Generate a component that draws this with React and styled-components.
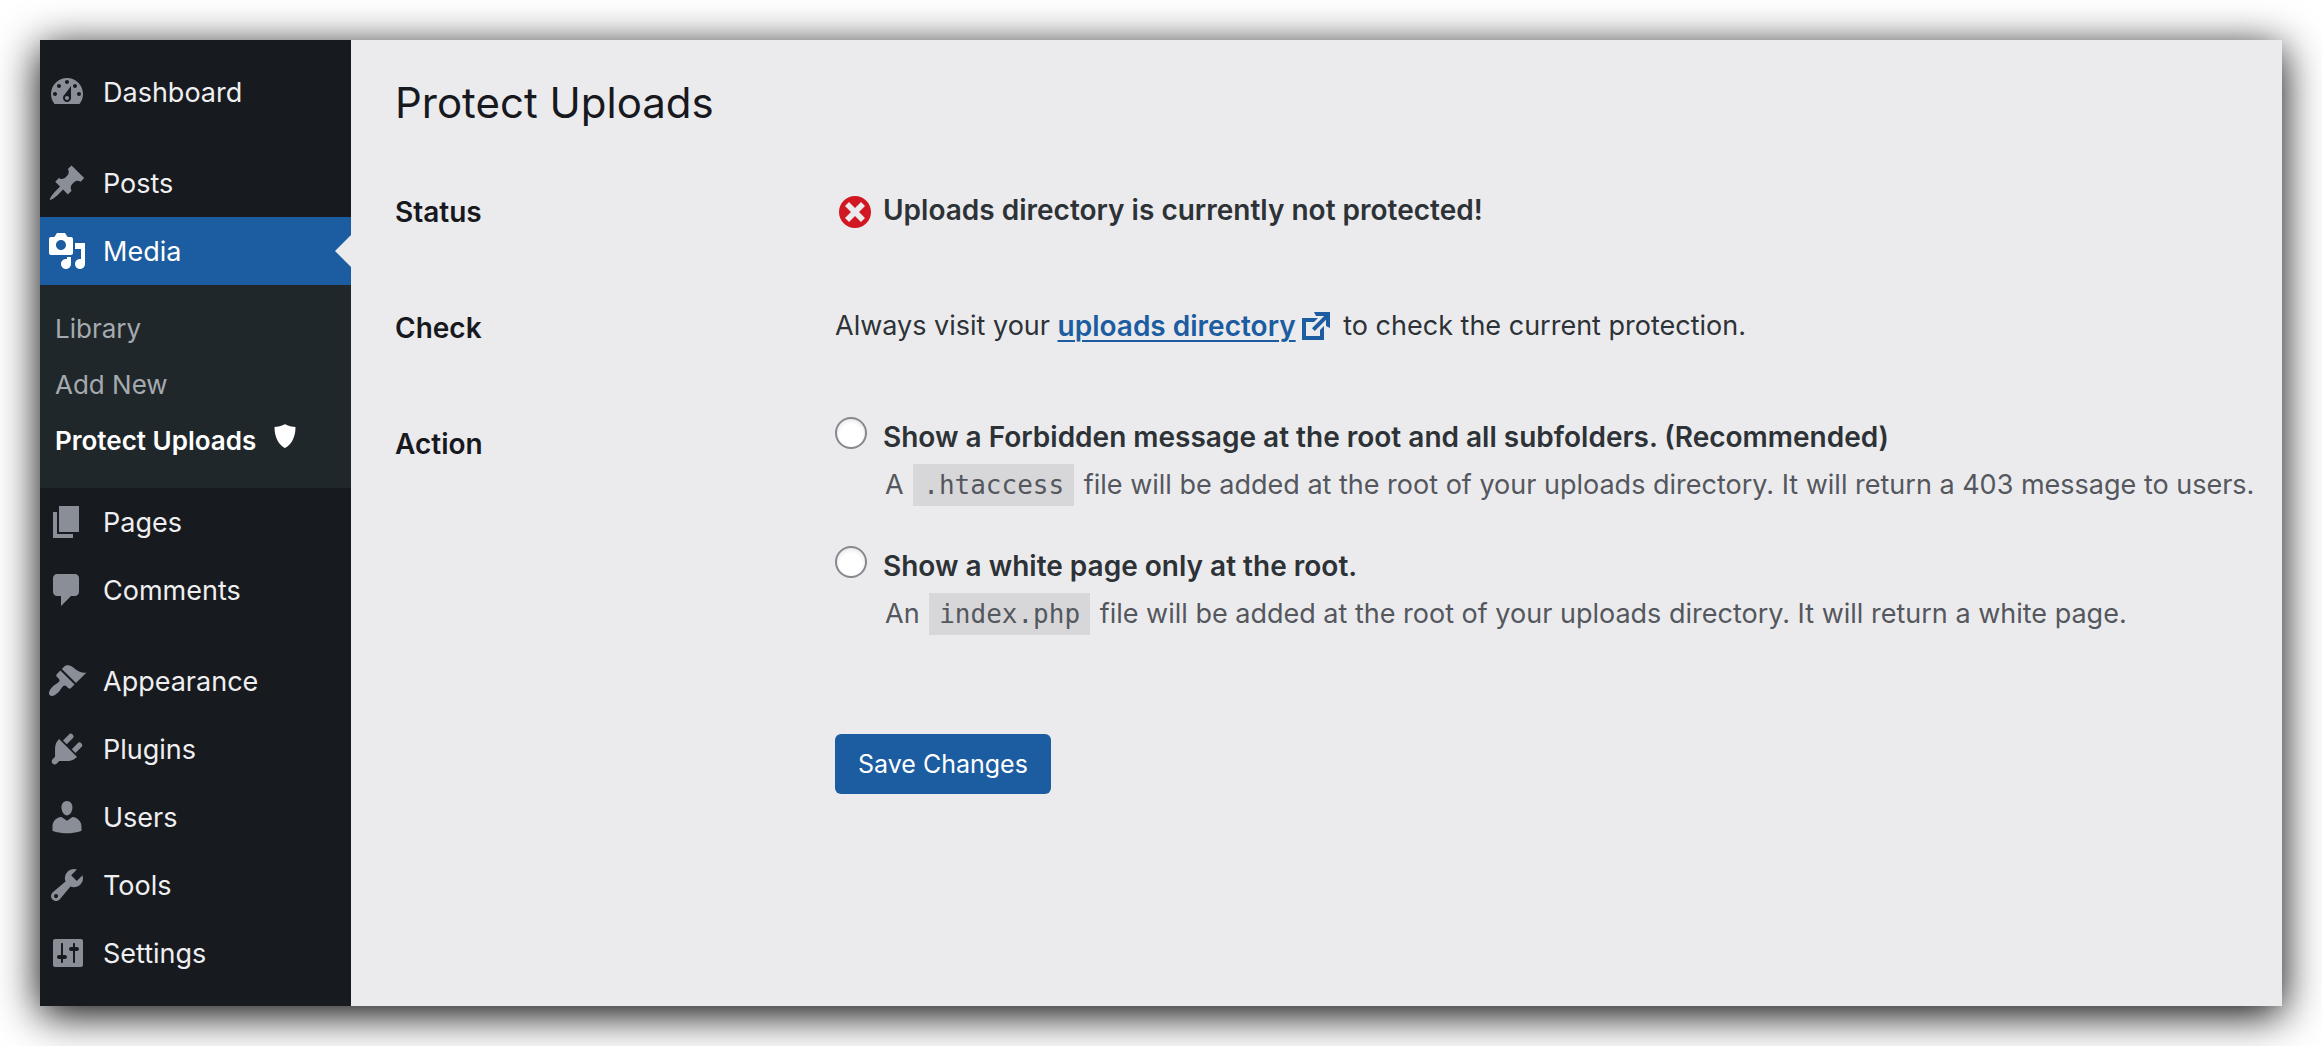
import React from "react";
import styled, { createGlobalStyle, css } from "styled-components";

const color = {
  sidebar: "#171a1f",
  submenu: "#20272a",
  accent: "#1c5ca0",
  surface: "#ebebed",
  heading: "#17191e",
  text: "#2d3237",
  muted: "#54575d",
  icon: "#8a8f97",
  error: "#d01722",
};

const GlobalStyle = createGlobalStyle`
  *, *::before, *::after { box-sizing: border-box; }
  body {
    margin: 0;
    background: #fff;
    font-family: Inter, "Liberation Sans", sans-serif;
    font-size: 27px;
    color: ${color.text};
  }
`;

const strongText = css`
  font-size: 28px;
  font-weight: 600;
`;

const Page = styled.div`
  padding: 40px;
`;

const Window = styled.div`
  display: flex;
  background: ${color.surface};
  box-shadow: 0 8px 40px #000;
`;

const Sidebar = styled.nav`
  flex: 0 0 311px;
  padding: 18px 0 19px;
  background: ${color.sidebar};
`;

const MenuGroup = styled.ul`
  margin: 0;
  padding: 0;
  list-style: none;

  & + & {
    margin-top: 23px;
  }
`;

const MenuLink = styled.a`
  position: relative;
  display: flex;
  align-items: center;
  gap: 16px;
  height: 68px;
  padding-left: 7px;
  color: #efeff1;
  text-decoration: none;

  svg {
    color: ${color.icon};
  }

  ${({ $current }) =>
    $current &&
    css`
      background: ${color.accent};
      color: #fff;

      svg {
        color: #fff;
      }

      &::after {
        content: "";
        position: absolute;
        right: 0;
        top: 18px;
        border: 16px solid transparent;
        border-left-width: 0;
        border-right-color: ${color.surface};
      }
    `}
`;

const Submenu = styled.ul`
  margin: 0;
  padding: 15px 0 20px;
  list-style: none;
  background: ${color.submenu};
`;

const SubmenuLink = styled.a`
  display: flex;
  align-items: center;
  gap: 14px;
  height: 56px;
  padding-left: 15px;
  font-size: 26px;
  font-weight: ${({ $current }) => ($current ? 600 : 400)};
  color: ${({ $current }) => ($current ? "#fff" : "#a5aaaf")};
  text-decoration: none;

  svg {
    margin-bottom: 8px;
  }
`;

const Icon = styled.svg`
  flex: none;
  width: ${({ $size }) => $size}px;
  height: ${({ $size }) => $size}px;
  fill: currentColor;
  fill-rule: evenodd;
`;

const Content = styled.main`
  flex: 1;
  min-width: 0;
  padding: 34px 0 0 44px;
`;

const Title = styled.h1`
  margin: 0 0 22px;
  font-size: 42px;
  font-weight: 400;
  line-height: 58px;
  color: ${color.heading};
`;

const Row = styled.div`
  display: grid;
  grid-template-columns: 440px minmax(0, 1fr);
  align-items: start;
`;

const RowLabel = styled.div`
  ${strongText}
  padding: 40px 0;
  line-height: 36px;
  color: ${color.heading};
`;

const Cell = styled.div`
  padding: 30px 0;
`;

const Line = styled.p`
  display: flex;
  align-items: center;
  margin: 0;
  line-height: 52px;
  white-space: pre;
`;

const Status = styled.strong`
  ${strongText}
  padding-left: 8px;
`;

const ErrorMark = styled.span`
  display: flex;
  padding-top: 4px;
  color: ${color.error};
`;

const TextLink = styled.a`
  ${strongText}
  display: flex;
  align-items: center;
  color: ${color.accent};
  text-underline-offset: 4px;
  text-decoration-thickness: 2px;
`;

const Options = styled.div`
  display: grid;
  gap: 33px;
`;

const Option = styled.div`
  display: grid;
  grid-template-columns: 32px minmax(0, 1fr);
  column-gap: 16px;
`;

const Radio = styled.input`
  appearance: none;
  width: 32px;
  height: 32px;
  margin: 1px 0 0;
  border: 2px solid #85888d;
  border-radius: 50%;
  background: #fff;
  box-shadow: inset 0 2px 4px rgba(0, 0, 0, 0.1);

  &:checked {
    border: 10px solid ${color.accent};
  }
`;

const OptionLabel = styled.label`
  ${strongText}
  line-height: 42px;
`;

const Help = styled.p`
  grid-column: 2;
  margin: 0;
  padding-left: 2px;
  line-height: 54px;
  color: ${color.muted};
  white-space: nowrap;
`;

const Code = styled.code`
  margin: 0 2px;
  padding: 6px 10px;
  background: #d7d7d9;
  font-family: "DejaVu Sans Mono", monospace;
  font-size: 26px;
`;

const SaveButton = styled.button`
  grid-column: 2;
  justify-self: start;
  height: 60px;
  margin-top: 63px;
  padding: 0 23px;
  border: 0;
  border-radius: 6px;
  background: ${color.accent};
  color: #fff;
  font-family: inherit;
  font-size: 25px;
`;

const paths = {
  dashboard:
    "M3.76 16h12.48c1.1-1.37 1.76-3.11 1.76-5 0-4.42-3.58-8-8-8s-8 3.58-8 8c0 1.89.66 3.63 1.76 5zM10 4c.55 0 1 .45 1 1s-.45 1-1 1-1-.45-1-1 .45-1 1-1zM6 6c.55 0 1 .45 1 1s-.45 1-1 1-1-.45-1-1 .45-1 1-1zm8 0c.55 0 1 .45 1 1s-.45 1-1 1-1-.45-1-1 .45-1 1-1zm-5.37 5.55L12 7v6c0 1.1-.9 2-2 2s-2-.9-2-2c0-.57.24-1.08.63-1.45zM4 10c.55 0 1 .45 1 1s-.45 1-1 1-1-.45-1-1 .45-1 1-1zm12 0c.55 0 1 .45 1 1s-.45 1-1 1-1-.45-1-1 .45-1 1-1zm-5 3c0-.55-.45-1-1-1s-1 .45-1 1 .45 1 1 1 1-.45 1-1z",
  pin: "M10.44 3.02l1.82-1.82 6.36 6.35-1.83 1.82c-1.05-.68-2.48-.57-3.41.36l-.75.75c-.92.93-1.04 2.35-.35 3.41l-1.83 1.82-2.41-2.41-2.8 2.79c-.42.42-3.38 2.71-3.8 2.29s1.86-3.39 2.28-3.81l2.79-2.79L4.1 9.36l1.83-1.82c1.05.69 2.48.57 3.4-.36l.75-.75c.93-.92 1.05-2.35.36-3.41z",
  media:
    "M13 11V4c0-.55-.45-1-1-1h-1.67L9 1H5L3.67 3H2c-.55 0-1 .45-1 1v7c0 .55.45 1 1 1h10c.55 0 1-.45 1-1zM7 4.5c1.38 0 2.5 1.12 2.5 2.5S8.38 9.5 7 9.5 4.5 8.38 4.5 7 5.62 4.5 7 4.5zM14 6h5v10.5c0 1.38-1.12 2.5-2.5 2.5S14 17.88 14 16.5s1.12-2.5 2.5-2.5c.17 0 .34.02.5.05V9h-3V6zm-4 8.05V13h2v3.5c0 1.38-1.12 2.5-2.5 2.5S7 17.88 7 16.5 8.12 14 9.5 14c.17 0 .34.02.5.05z",
  page: "M6 15V2h10v13H6zm-1 1h8v2H3V5h2v11z",
  comment:
    "M5 2h9c1.1 0 2 .9 2 2v7c0 1.1-.9 2-2 2h-2l-5 5v-5H5c-1.1 0-2-.9-2-2V4c0-1.1.9-2 2-2z",
  brush:
    "M14.48 11.06L7.41 3.99l1.5-1.5c.5-.56 2.3-.47 3.51.32 1.21.8 1.43 1.28 2.91 2.1 1.18.64 2.45 1.26 4.45.85zm-.71.71L6.7 4.7 4.93 6.47c-.39.39-.39 1.02 0 1.41l1.06 1.06c.39.39.39 1.03 0 1.42-.6.6-1.43 1.11-2.21 1.69-.35.26-.7.53-1.01.84C1.43 14.23.4 16.08 1.4 17.07c.99 1 2.84-.03 4.18-1.36.31-.31.58-.66.85-1.02.57-.78 1.08-1.61 1.69-2.21.39-.39 1.02-.39 1.41 0l1.06 1.06c.39.39 1.02.39 1.41 0z",
  plug: "M13.11 4.36L9.87 7.6 8 5.73l3.24-3.24c.35-.34 1.05-.2 1.56.32.52.51.66 1.21.31 1.55zm-8 1.77l.91-1.12 9.01 9.01-1.19.84c-.71.71-2.63 1.16-3.82 1.16H6.14L4.9 17.26c-.59.59-1.54.59-2.12 0-.59-.58-.59-1.53 0-2.12l1.24-1.24v-3.88c0-1.13.4-3.19 1.09-3.89zm7.26 3.97l3.24-3.24c.34-.35 1.04-.21 1.55.31.52.51.66 1.21.31 1.55l-3.24 3.25z",
  user: "M10 9.25c-2.27 0-2.73-3.44-2.73-3.44C7 4.02 7.82 2 9.97 2c2.16 0 2.98 2.02 2.71 3.81 0 0-.41 3.44-2.68 3.44zm0 2.57L12.72 10c2.39 0 4.52 2.33 4.52 4.53v2.49s-3.65 1.13-7.24 1.13c-3.65 0-7.24-1.13-7.24-1.13v-2.49c0-2.25 1.94-4.48 4.47-4.48z",
  wrench:
    "M16.68 9.77c-1.34 1.34-3.3 1.67-4.95.99l-5.41 6.52c-.99.99-2.59.99-3.58 0s-.99-2.59 0-3.57l6.52-5.42c-.68-1.65-.35-3.61.99-4.95 1.28-1.28 3.12-1.62 4.72-1.06l-2.89 2.89 2.82 2.82 2.86-2.87c.53 1.58.18 3.39-1.08 4.65zM3.81 16.21c.4.39 1.04.39 1.43 0 .4-.4.4-1.04 0-1.43-.39-.4-1.03-.4-1.43 0-.39.39-.39 1.03 0 1.43z",
  sliders:
    "M18 16V4c0-.55-.45-1-1-1H4c-.55 0-1 .45-1 1v12c0 .55.45 1 1 1h13c.55 0 1-.45 1-1zM8 11h1c.55 0 1 .45 1 1s-.45 1-1 1H8v1.5c0 .28-.22.5-.5.5s-.5-.22-.5-.5V13H6c-.55 0-1-.45-1-1s.45-1 1-1h1V5.5c0-.28.22-.5.5-.5s.5.22.5.5V11zm5-2h-1c-.55 0-1-.45-1-1s.45-1 1-1h1V5.5c0-.28.22-.5.5-.5s.5.22.5.5V7h1c.55 0 1 .45 1 1s-.45 1-1 1h-1v5.5c0 .28-.22.5-.5.5s-.5-.22-.5-.5V9z",
  shield: "M10 2s3 2 7 2c0 11-7 14-7 14S3 15 3 4c4 0 7-2 7-2z",
  dismiss:
    "M10 2c4.42 0 8 3.58 8 8s-3.58 8-8 8-8-3.58-8-8 3.58-8 8-8zm5 11l-3-3 3-3-2-2-3 3-3-3-2 2 3 3-3 3 2 2 3-3 3 3z",
  external:
    "M9 3h8v8l-2-1V6.92l-5.6 5.59-1.41-1.41L14.08 5H10zm3 12v-3l2-2v7H3V6h8L9 8H5v7h7z",
};

function Glyph({ name, size = 40 }) {
  return (
    <Icon viewBox="0 0 20 20" $size={size} aria-hidden="true">
      <path d={paths[name]} />
    </Icon>
  );
}

const menu = [
  [{ label: "Dashboard", icon: "dashboard" }],
  [
    { label: "Posts", icon: "pin" },
    {
      label: "Media",
      icon: "media",
      current: true,
      children: [
        { label: "Library" },
        { label: "Add New" },
        { label: "Protect Uploads", icon: "shield", current: true },
      ],
    },
    { label: "Pages", icon: "page" },
    { label: "Comments", icon: "comment" },
  ],
  [
    { label: "Appearance", icon: "brush" },
    { label: "Plugins", icon: "plug" },
    { label: "Users", icon: "user" },
    { label: "Tools", icon: "wrench" },
    { label: "Settings", icon: "sliders" },
  ],
];

const options = [
  {
    id: "forbidden",
    label: "Show a Forbidden message at the root and all subfolders. (Recommended)",
    article: "A",
    file: ".htaccess",
    help: "file will be added at the root of your uploads directory. It will return a 403 message to users.",
  },
  {
    id: "index",
    label: "Show a white page only at the root.",
    article: "An",
    file: "index.php",
    help: "file will be added at the root of your uploads directory. It will return a white page.",
  },
];

function MenuItem({ item }) {
  return (
    <li>
      <MenuLink href="#" $current={item.current}>
        <Glyph name={item.icon} />
        {item.label}
      </MenuLink>
      {item.children && (
        <Submenu>
          {item.children.map((child) => (
            <li key={child.label}>
              <SubmenuLink href="#" $current={child.current}>
                {child.label}
                {child.icon && <Glyph name={child.icon} size={30} />}
              </SubmenuLink>
            </li>
          ))}
        </Submenu>
      )}
    </li>
  );
}

export default function App() {
  return (
    <Page>
      <GlobalStyle />
      <Window>
        <Sidebar>
          {menu.map((group) => (
            <MenuGroup key={group[0].label}>
              {group.map((item) => (
                <MenuItem key={item.label} item={item} />
              ))}
            </MenuGroup>
          ))}
        </Sidebar>
        <Content>
          <Title>Protect Uploads</Title>
          <form onSubmit={(event) => event.preventDefault()}>
            <Row>
              <RowLabel>Status</RowLabel>
              <Cell>
                <Line>
                  <ErrorMark>
                    <Glyph name="dismiss" />
                  </ErrorMark>
                  <Status>Uploads directory is currently not protected!</Status>
                </Line>
              </Cell>
            </Row>
            <Row>
              <RowLabel>Check</RowLabel>
              <Cell>
                <Line>
                  {"Always visit your "}
                  <TextLink href="#">
                    uploads directory
                    <Glyph name="external" />
                  </TextLink>
                  {" to check the current protection."}
                </Line>
              </Cell>
            </Row>
            <Row role="radiogroup" aria-labelledby="action-label">
              <RowLabel id="action-label">Action</RowLabel>
              <Cell>
                <Options>
                  {options.map((option) => (
                    <Option key={option.id}>
                      <Radio type="radio" name="protection" id={option.id} />
                      <OptionLabel htmlFor={option.id}>{option.label}</OptionLabel>
                      <Help>
                        {option.article} <Code>{option.file}</Code> {option.help}
                      </Help>
                    </Option>
                  ))}
                </Options>
              </Cell>
            </Row>
            <Row>
              <SaveButton type="submit">Save Changes</SaveButton>
            </Row>
          </form>
        </Content>
      </Window>
    </Page>
  );
}
